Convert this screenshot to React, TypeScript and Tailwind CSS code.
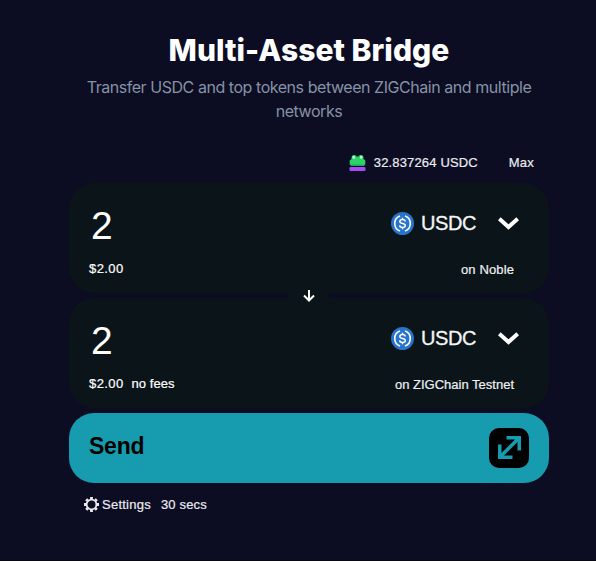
function UsdcLogo() {
  return (
    <svg className="size-[23px] shrink-0" viewBox="0 0 32 32" fill="none">
      <circle cx="16" cy="16" r="16" fill="#2775ca" />
      <path d="M12.600 5.600a11 11 0 0 0 0 20.800M19.400 5.600a11 11 0 0 1 0 20.800" stroke="#fff" strokeWidth="2.200" />
      <path d="M19.800 13.200c-.2-1.900-1.700-2.700-3.800-2.700-2.200 0-3.700.9-3.700 2.600 0 3.900 7.600 1.700 7.600 5.700 0 1.700-1.600 2.700-3.900 2.700-2.400 0-3.900-1-4-2.900M16 8v2.500M16 21.500V24" stroke="#fff" strokeWidth="2" />
    </svg>
  );
}

function FrogLogo() {
  return (
    <svg className="h-4 w-[17px] shrink-0" viewBox="0 0 17 16">
      <path d="M2.500 4c0-3 .5-4 2.500-4 1.500 0 2 .6 2.300 1.500h2.400C10 .6 10.500 0 12 0c2 0 2.500 1 2.500 4l1.800 1.500v4L14.500 11h-12L.7 9.500v-4z" fill="#2bd36b" />
      <path d="M1 9.500h15L14.500 11h-12z" fill="#22a95a" />
      <circle cx="4.800" cy="2.400" r="1.300" fill="#d5f8df" />
      <circle cx="12.200" cy="2.400" r="1.300" fill="#d5f8df" />
      <rect x="0.500" y="12" width="16" height="4" rx="1" fill="#a44bf5" />
    </svg>
  );
}

function Chevron() {
  return (
    <svg className="ml-[21px] mr-px h-[13px] w-[21px] shrink-0" viewBox="0 0 21 13" fill="none">
      <path d="M1.300 1.800 10.500 10 19.700 1.800" stroke="#fff" strokeWidth="4" />
    </svg>
  );
}

function AssetCard({ fees, network, networkClass }: { fees?: string; network: string; networkClass: string }) {
  return (
    <div className="flex h-[110px] justify-between rounded-[25px] bg-[#0b1419] px-5">
      <div className="flex flex-col">
        <div className="mt-[22px] h-[42px] pl-[2px] text-[39px] leading-[42px]">2</div>
        <div className="mt-[12px] flex gap-2 text-[13px] leading-5 tracking-[0.4px] [-webkit-text-stroke:0.2px]">
          <span>$2.00</span>
          {fees && <span className="tracking-[0.05px]">{fees}</span>}
        </div>
      </div>
      <div className="flex flex-col items-end pr-[9px]">
        <div className="mt-[25px] flex h-[30px] items-center">
          <UsdcLogo />
          <span className="ml-[7px] w-14 whitespace-nowrap text-[20px] leading-[30px] tracking-[-0.4px] text-[#f3f5f5] [-webkit-text-stroke:0.3px]">USDC</span>
          <Chevron />
        </div>
        <div className={`mt-[22px] pr-[6px] text-[13px] leading-5 text-[#eef1f1] [-webkit-text-stroke:0.2px] ${networkClass}`}>{network}</div>
      </div>
    </div>
  );
}

export default function App() {
  return (
    <main className="h-[561px] w-[596px] border-b border-[#07070f] bg-[#0c0c22] pl-[69px] pt-[32px] font-['Liberation_Sans',sans-serif] text-white">
      <div className="w-[480px]">
        <header className="text-center font-['Inter',sans-serif]">
          <h1 className="whitespace-nowrap text-[30px] font-extrabold leading-9 tracking-[0.05px]">Multi-Asset Bridge</h1>
          <p className="mt-[7px] text-[16px] leading-6 tracking-[-0.45px] text-[#8593a5]">
            Transfer USDC and top tokens between ZIGChain and multiple networks
          </p>
        </header>

        <div className="mt-[28px] flex h-[32px] items-start justify-end pr-[15px] pt-[2px] text-[13px] leading-5 text-[#e9ebf0] [-webkit-text-stroke:0.2px]">
          <div className="mr-[31px] flex items-center gap-2">
            <FrogLogo />
            <span className="tracking-[0.15px]">32.837264 USDC</span>
          </div>
          <span className="tracking-[0.2px]">Max</span>
        </div>

        <div className="relative flex flex-col gap-[5px]">
          <AssetCard network="on Noble" networkClass="tracking-[0.12px]" />
          <AssetCard network="on ZIGChain Testnet" networkClass="tracking-[0px]" fees="no fees" />
          <div className="absolute left-[220px] top-[93px] flex size-10 items-center justify-center rounded-[12px] bg-[#0b1419]">
            <svg className="size-3" viewBox="0 0 12 12" fill="none">
              <path d="M6 0v10M1 5.500l5 5 5-5" stroke="#fff" strokeWidth="2" />
            </svg>
          </div>
        </div>

        <button className="mt-[5px] flex h-[70px] w-full items-center justify-between rounded-[25px] bg-[#169cae] px-5 text-black">
          <span className="-mt-1 text-[23px] font-bold leading-8 tracking-[-0.25px]">Send</span>
          <span className="flex size-10 items-center justify-center rounded-[10px] bg-black">
            <svg className="-mt-px size-[23px]" viewBox="0 0 23 23" fill="none" stroke="#169cae" strokeWidth="3.500">
              <path d="M8.500 1.750h12.750V14.500M1.750 8.500v12.750H14.500M3 20 20 3" />
            </svg>
          </span>
        </button>

        <footer className="mt-3 flex items-center pl-[15px] text-[13px] leading-5 text-[#e9ebf0] [-webkit-text-stroke:0.2px]">
          <svg className="-mt-px size-[15px]" viewBox="0 0 15 15" fill="none" stroke="#e9ebf0">
            <circle cx="7.500" cy="7.500" r="4.900" strokeWidth="1.800" />
            <path d="M7.500 0v2M7.500 13v2M0 7.500h2M13 7.500h2M2.200 2.200l1.500 1.500M11.300 11.300l1.500 1.500M2.200 12.800l1.500-1.500M11.300 3.700l1.500-1.500" strokeWidth="2.800" />
          </svg>
          <span className="ml-[3px] tracking-[0.25px]">Settings</span>
          <span className="ml-[10px] tracking-[0.15px]">30 secs</span>
        </footer>
      </div>
    </main>
  );
}
